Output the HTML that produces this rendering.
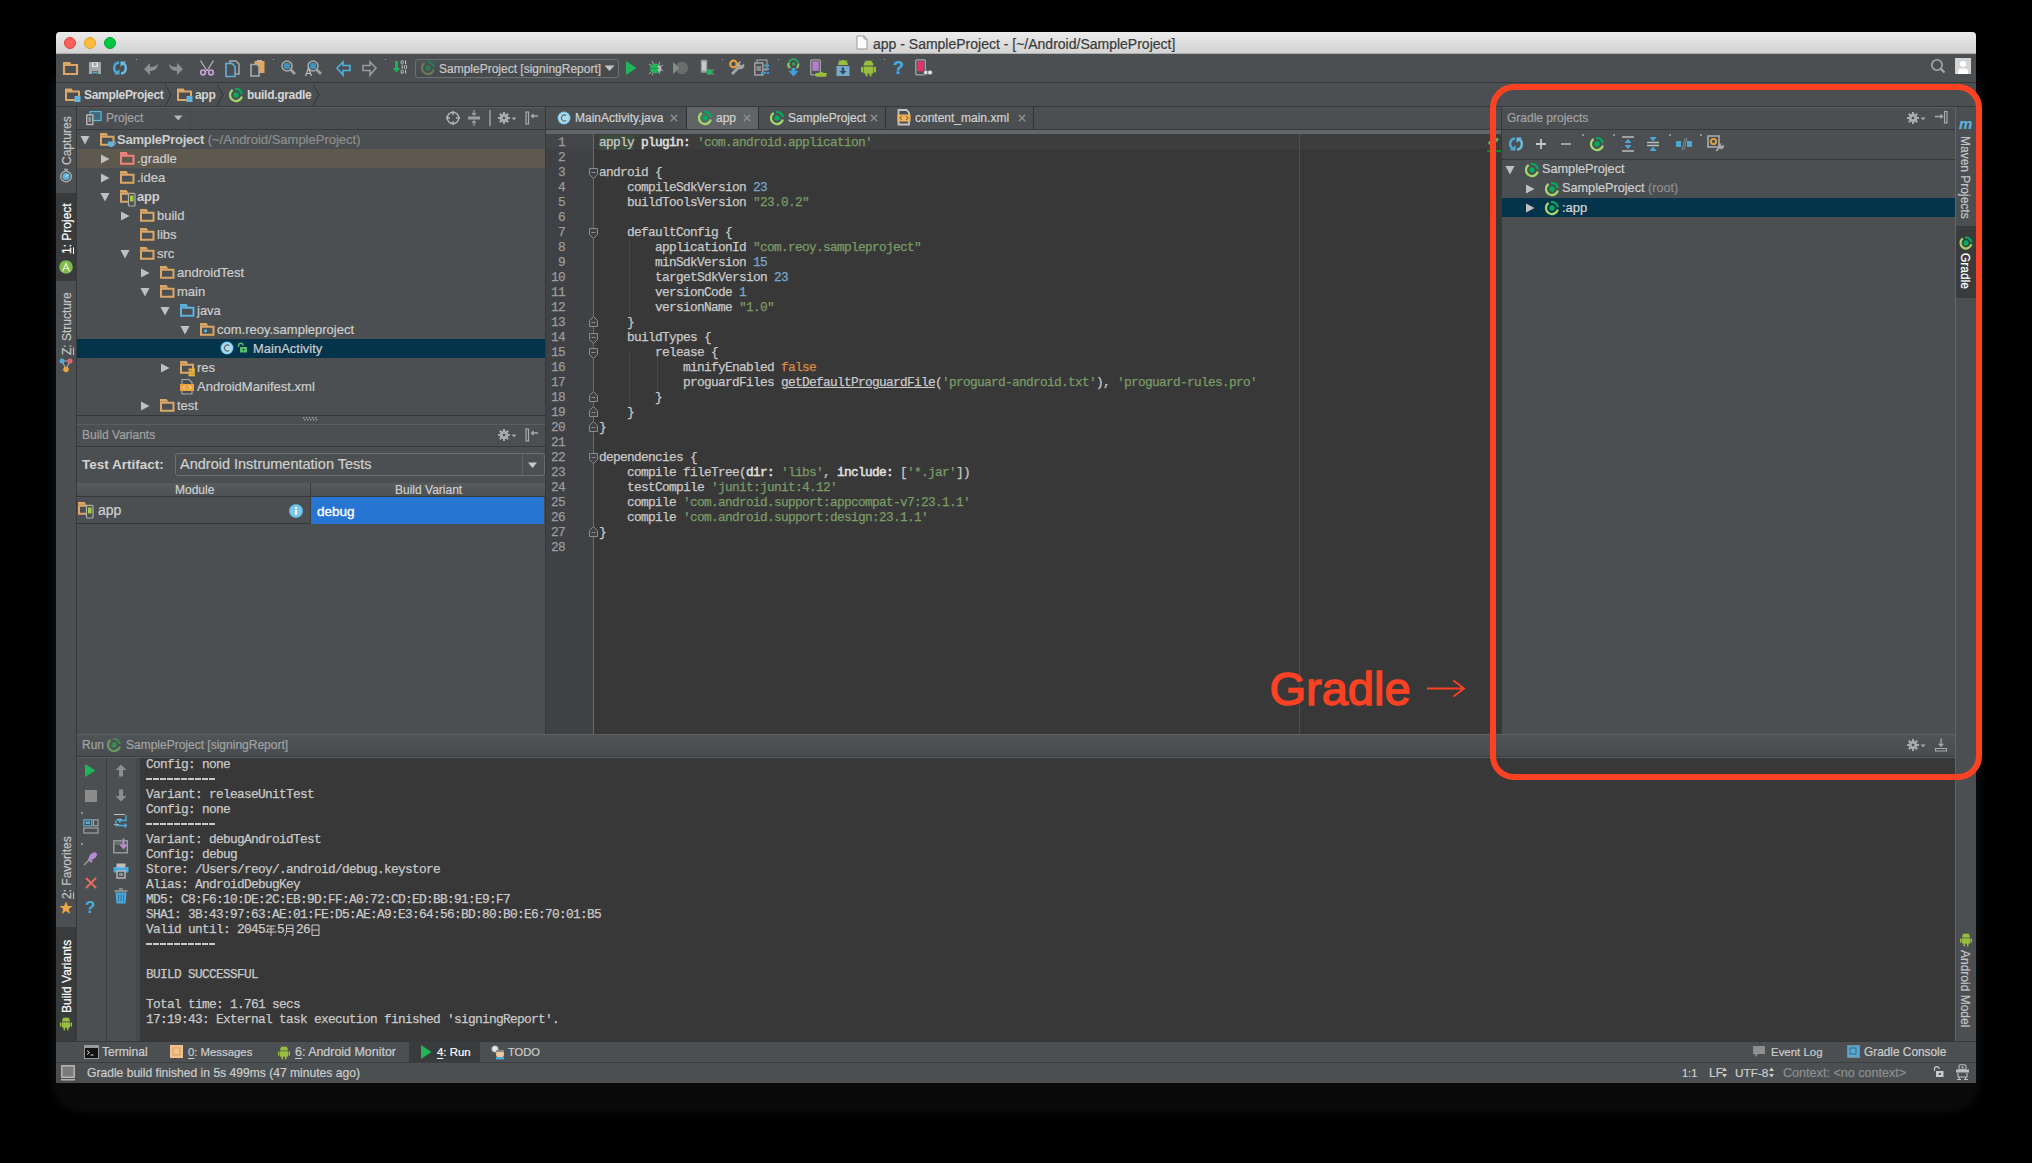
<!DOCTYPE html><html><head><meta charset="utf-8"><style>
*{margin:0;padding:0;box-sizing:border-box}
html,body{width:2032px;height:1163px;overflow:hidden;background:#000}
body{position:relative;font-family:"Liberation Sans",sans-serif;font-size:12px;color:#c9c9c9}
.a{position:absolute}
svg.a{overflow:visible}
.t{position:absolute;white-space:pre;-webkit-text-stroke:0.2px currentColor}
.m{font-family:"Liberation Mono",monospace;font-size:12.8px;letter-spacing:-0.68px;-webkit-text-stroke:0.25px currentColor}
.s{color:#7b9b67}.n{color:#79a7cf}.k{color:#dc8a45}
.vr{position:absolute;transform-origin:0 0;white-space:pre;line-height:20px;height:20px;-webkit-text-stroke:0.2px currentColor}
u{text-decoration:underline;text-underline-offset:2px}
b{-webkit-text-stroke:0}
</style></head><body>
<div class="a" style="left:51px;top:60px;width:1930px;height:1053px;border-radius:34px;background:#0a0a0a;filter:blur(3px)"></div>
<div class="a" style="left:56px;top:32px;width:1920px;height:1051px;background:#4b4f51;border-radius:4px 4px 0 0"></div>
<div class="a" style="left:56px;top:32px;width:1920px;height:22px;background:linear-gradient(#ebebeb,#d3d3d3);border-radius:4px 4px 0 0;border-bottom:1px solid #b0b0b0"></div>
<div class="a" style="left:64px;top:37px;width:12px;height:12px;border-radius:50%;background:#fc605c;border:1px solid #e0443e"></div>
<div class="a" style="left:84px;top:37px;width:12px;height:12px;border-radius:50%;background:#fdbc40;border:1px solid #dea123"></div>
<div class="a" style="left:104px;top:37px;width:12px;height:12px;border-radius:50%;background:#00c642;border:1px solid #00a52b"></div>
<svg class="a" style="left:856px;top:35px;" width="12" height="15" viewBox="0 0 12 15"><path d="M1 1h7l3 3v10H1z" fill="#fafafa" stroke="#9a9a9a" stroke-width="1"/><path d="M8 1v3h3" fill="none" stroke="#9a9a9a"/></svg>
<div class="t" style="left:873px;top:33.5px;height:20px;line-height:20px;font-size:14px;color:#3a3a3a">app - SampleProject - [~/Android/SampleProject]</div>
<div class="a" style="left:56px;top:82px;width:1920px;height:1px;background:#363839"></div>
<div class="a" style="left:135.5px;top:58.5px;width:1.2px;height:1.2px;background:#a0a2a3"></div>
<div class="a" style="left:272.5px;top:58.5px;width:1.2px;height:1.2px;background:#a0a2a3"></div>
<div class="a" style="left:384.5px;top:58.5px;width:1.2px;height:1.2px;background:#a0a2a3"></div>
<div class="a" style="left:721.5px;top:58.5px;width:1.2px;height:1.2px;background:#a0a2a3"></div>
<div class="a" style="left:778.0px;top:58.5px;width:1.2px;height:1.2px;background:#a0a2a3"></div>
<div class="a" style="left:884.0px;top:58.5px;width:1.2px;height:1.2px;background:#a0a2a3"></div>
<svg class="a" style="left:63px;top:62px;" width="15" height="13" viewBox="0 0 15 13"><path d="M1 3h13v9H1z" fill="none" stroke="#dca766" stroke-width="2.2"/><path d="M0 0h7l1.5 2.5H0z" fill="#dca766"/></svg>
<svg class="a" style="left:89px;top:62px;" width="13" height="13" viewBox="0 0 13 13"><path d="M0 0h12v12H0z" fill="#a7a7a7"/><rect x="3" y="0.5" width="6" height="4.5" fill="#e8e8e8"/><rect x="4.5" y="1" width="3" height="3" fill="#a7a7a7"/><rect x="3" y="9" width="6" height="3" fill="#4a4f51"/><rect x="3.5" y="9.5" width="5" height="2" fill="#5aa3cc"/></svg>
<svg class="a" style="left:112px;top:60px;" width="16" height="16" viewBox="0 0 16 16"><path d="M7 2.5A5.5 5.5 0 0 0 6 13.2" fill="none" stroke="#49a9da" stroke-width="2.4"/><path d="M2 14.5L7.5 14.5L7.5 9z" fill="#49a9da"/><path d="M9 13.5A5.5 5.5 0 0 0 10 2.8" fill="none" stroke="#6bbbe2" stroke-width="2.4"/><path d="M14 1.5L8.5 1.5L8.5 7z" fill="#6bbbe2"/></svg>
<svg class="a" style="left:144px;top:62px;" width="14" height="13" viewBox="0 0 14 13"><path d="M0 7L6 1V5C10 5 13 4 14 1C14 7 10 9 6 9V13z" fill="#8e8e8e"/></svg>
<svg class="a" style="left:169px;top:62px;" width="14" height="13" viewBox="0 0 14 13"><path d="M14 7L8 1V5C4 5 1 4 0 1C0 7 4 9 8 9V13z" fill="#8e8e8e" transform="translate(0,0)"/></svg>
<svg class="a" style="left:199px;top:60px;" width="16" height="16" viewBox="0 0 16 16"><path d="M1.5 0.5L8 11M14.5 0.5L8 11" stroke="#b4b4b4" stroke-width="1.3"/><circle cx="4" cy="12.5" r="2.3" fill="none" stroke="#c99bd8" stroke-width="1.8"/><circle cx="12" cy="12.5" r="2.3" fill="none" stroke="#c99bd8" stroke-width="1.8"/></svg>
<svg class="a" style="left:225px;top:60px;" width="16" height="17" viewBox="0 0 16 17"><path d="M5 1h6l3 3v10H5z" fill="#4a4f51" stroke="#a9a9a9" stroke-width="1.5"/><path d="M1 3.5h6l3 3v10H1z" fill="#4a4f51" stroke="#62b0dc" stroke-width="1.6"/></svg>
<svg class="a" style="left:250px;top:60px;" width="16" height="17" viewBox="0 0 16 17"><rect x="4.5" y="1" width="10" height="12" fill="#e0a85e"/><rect x="7" y="0" width="5" height="2" fill="#b8b8b8"/><path d="M1 4.5h6l2 2V16H1z" fill="#4a4f51" stroke="#ababab" stroke-width="1.6"/></svg>
<svg class="a" style="left:280px;top:59px;" width="18" height="18" viewBox="0 0 18 18"><circle cx="7" cy="7" r="5" fill="#4a4f51" stroke="#a9a9a9" stroke-width="1.6"/><circle cx="7" cy="7" r="3.2" fill="#3e93b9"/><path d="M10.5 10.5L15 15" stroke="#a2a2a2" stroke-width="2.6"/></svg>
<svg class="a" style="left:305px;top:59px;" width="18" height="18" viewBox="0 0 18 18"><circle cx="8" cy="7" r="5" fill="#4a4f51" stroke="#a9a9a9" stroke-width="1.6"/><circle cx="8" cy="7" r="3.2" fill="#3e93b9"/><path d="M11.5 10.5L16 15" stroke="#a2a2a2" stroke-width="2.6"/><path d="M0.5 17L3.5 9L6.5 17M1.5 14.5h4" fill="none" stroke="#c4c4c4" stroke-width="1.1"/></svg>
<svg class="a" style="left:336px;top:61px;" width="15" height="15" viewBox="0 0 15 15"><path d="M1 7L7 1V4.5H14V9.5H7V14z" fill="none" stroke="#4eb0df" stroke-width="1.6"/></svg>
<svg class="a" style="left:362px;top:61px;" width="15" height="15" viewBox="0 0 15 15"><path d="M14 7L8 1V4.5H1V9.5H8V14z" fill="none" stroke="#9a9a9a" stroke-width="1.6"/></svg>
<svg class="a" style="left:392px;top:60px;" width="17" height="16" viewBox="0 0 17 16"><path d="M3 1h3v7h2.5L4.5 12.5L0.5 8H3z" fill="#1fb159"/><ellipse cx="10.2" cy="2.3" rx="1.2" ry="1.8" fill="none" stroke="#c4c4c4" stroke-width="0.9"/><path d="M13.6 0.5v3.6" stroke="#c4c4c4" stroke-width="1.1"/><path d="M10.2 5.2v3.6" stroke="#c4c4c4" stroke-width="1.1"/><ellipse cx="13.6" cy="7.0" rx="1.2" ry="1.8" fill="none" stroke="#c4c4c4" stroke-width="0.9"/><ellipse cx="10.2" cy="11.7" rx="1.2" ry="1.8" fill="none" stroke="#c4c4c4" stroke-width="0.9"/><path d="M13.6 9.9v3.6" stroke="#c4c4c4" stroke-width="1.1"/></svg>
<div class="a" style="left:415px;top:59px;width:204px;height:19px;border:1px solid #6d7072;border-radius:3px;background:linear-gradient(#4d5153,#45494b)"></div>
<svg class="a" style="left:420px;top:60px;" width="16" height="16" viewBox="0 0 16 16"><path d="M6.96 2.09A6.0 6.0 0 0 1 13.94 7.16" fill="none" stroke="#2c7a55" stroke-width="2.2"/><path d="M13.82 9.45A6.0 6.0 0 1 1 4.64 3.03" fill="none" stroke="#667a55" stroke-width="2.2"/><circle cx="8" cy="8" r="2.7" fill="#2c7a55"/></svg>
<div class="t" style="left:439px;top:60px;height:19px;line-height:19px;font-size:12px;color:#c8c8c8">SampleProject [signingReport]</div>
<svg class="a" style="left:604px;top:65px;" width="12" height="7" viewBox="0 0 12 7"><path d="M0.5 0.5h10L5.5 6z" fill="#c5c5c5"/></svg>
<svg class="a" style="left:626px;top:61px;" width="11" height="14" viewBox="0 0 11 14"><path d="M0 0L10.5 7L0 14z" fill="#20b55a"/></svg>
<svg class="a" style="left:648px;top:60px;" width="16" height="16" viewBox="0 0 16 16"><path d="M1 4L4 6M1 14L4 11M12 2L10.5 5M12 14L10.5 11M15 5L13 6.5M15 11L13 9.5M4 1L5.5 4M4 15L5.5 12" stroke="#b9b9b9" stroke-width="0.9"/><ellipse cx="7.5" cy="8.5" rx="5.5" ry="5" fill="#22b459"/><ellipse cx="11.5" cy="8.5" rx="1.8" ry="3.3" fill="#b9b9b9"/><path d="M2 8.5h9" stroke="#189048" stroke-width="0.7"/></svg>
<svg class="a" style="left:673px;top:61px;" width="15" height="14" viewBox="0 0 15 14"><defs><pattern id="hp" width="2.8" height="2.8" patternUnits="userSpaceOnUse" patternTransform="rotate(45)"><rect width="1.4" height="1.4" fill="#8a8a8a"/><rect x="1.4" y="1.4" width="1.4" height="1.4" fill="#8a8a8a"/></pattern><clipPath id="hc"><circle cx="9" cy="7" r="6.2"/></clipPath></defs><rect x="2" y="0" width="14" height="14" fill="url(#hp)" clip-path="url(#hc)"/><path d="M0 1L6.5 7L0 13z" fill="#8a8a8a"/></svg>
<svg class="a" style="left:700px;top:59px;" width="15" height="18" viewBox="0 0 15 18"><rect x="0.8" y="0.8" width="6.5" height="13" rx="1" fill="#9e9e9e"/><rect x="2" y="2.5" width="4" height="9" fill="#c9c9c9"/><ellipse cx="9.5" cy="13" rx="3" ry="3" fill="#21b45a"/><path d="M12.5 11.5l1.5-1M12.5 14.5l1.5 1" stroke="#b9b9b9" stroke-width="0.8"/></svg>
<svg class="a" style="left:729px;top:59px;" width="17" height="18" viewBox="0 0 17 18"><circle cx="4.5" cy="5" r="3.3" fill="none" stroke="#e3a33d" stroke-width="2.2"/><path d="M15 4.5L12.5 6.5L10.5 5L12.5 2.5A4 4 0 0 0 8 8L2 14L4 16L10 10A4 4 0 0 0 15 4.5z" fill="#a6a6a6"/></svg>
<svg class="a" style="left:754px;top:59px;" width="16" height="18" viewBox="0 0 16 18"><rect x="3" y="1" width="10" height="10" fill="none" stroke="#a0a0a0" stroke-width="1.2"/><rect x="0.8" y="4" width="8" height="12" fill="#4a4f51" stroke="#a8a8a8" stroke-width="1.4"/><rect x="2.5" y="7" width="4.5" height="5" fill="#8a8a8a"/><rect x="10" y="5.5" width="2" height="2" fill="#3ea2d8"/><rect x="13" y="5.5" width="2" height="2" fill="#3ea2d8"/><rect x="10" y="9" width="2" height="2" fill="#3ea2d8"/><rect x="13" y="9" width="2" height="2" fill="#3ea2d8"/><rect x="7" y="13" width="2" height="2" fill="#3ea2d8"/><rect x="10" y="13" width="2" height="2" fill="#3ea2d8"/><rect x="13" y="13" width="2" height="2" fill="#3ea2d8"/></svg>
<svg class="a" style="left:786px;top:59px;" width="15" height="18" viewBox="0 0 15 18"><path d="M3 5A4.5 4.5 0 0 1 12 4" fill="none" stroke="#2aa45d" stroke-width="2"/><path d="M2.5 4A4.5 4.5 0 0 0 4 9" fill="none" stroke="#8ccc6b" stroke-width="2"/><path d="M12.3 4.5A4.5 4.5 0 0 1 10.5 9" fill="none" stroke="#8ccc6b" stroke-width="2"/><circle cx="7.5" cy="5" r="1.8" fill="#2aa45d"/><path d="M5.5 9h4v3h3l-5 5.5l-5-5.5h3z" fill="#3fa3d8"/></svg>
<svg class="a" style="left:810px;top:59px;" width="17" height="18" viewBox="0 0 17 18"><rect x="0.8" y="0.8" width="9.5" height="15" rx="1" fill="#4a4f51" stroke="#a8a8a8" stroke-width="1.3"/><rect x="2.3" y="2.3" width="6.5" height="9.5" fill="#b37ecc"/><path d="M6.5 17.5A4.2 4.2 0 0 1 15.5 17.5z" fill="#98bd3f"/><rect x="5.5" y="14" width="11" height="3.5" fill="#98bd3f"/></svg>
<svg class="a" style="left:836px;top:59px;" width="14" height="18" viewBox="0 0 14 18"><path d="M2 6A5 5 0 0 1 12 6z" fill="#98bd3f"/><path d="M3 1l1.5 2M11 1L9.5 3" stroke="#98bd3f" stroke-width="0.9"/><rect x="0.5" y="7" width="13" height="10" fill="#77a9cb"/><path d="M5.8 8.5h2.4v3.5h2.3L7 15.5L3.5 12h2.3z" fill="#2d4b5c"/></svg>
<svg class="a" style="left:861px;top:59px;" width="15" height="18" viewBox="0 0 15 18"><path d="M2.5 6.5A5 5 0 0 1 12.5 6.5z" fill="#98bd3f"/><path d="M4 1.5l1.5 2M11 1.5L9.5 3.5" stroke="#98bd3f" stroke-width="0.9"/><rect x="2.5" y="7.5" width="10" height="7" rx="1" fill="#98bd3f"/><rect x="0" y="7.5" width="2" height="6" rx="1" fill="#98bd3f"/><rect x="13" y="7.5" width="2" height="6" rx="1" fill="#98bd3f"/><rect x="4.5" y="13" width="2" height="4.5" rx="1" fill="#98bd3f"/><rect x="8.5" y="13" width="2" height="4.5" rx="1" fill="#98bd3f"/></svg>
<div class="t" style="left:893px;top:58px;height:20px;line-height:20px;font-size:18px;font-weight:bold;color:#45b0e0;line-height:20px">?</div>
<svg class="a" style="left:915px;top:59px;" width="18" height="18" viewBox="0 0 18 18"><rect x="0.8" y="0.8" width="9.5" height="15" rx="1" fill="#4a4f51" stroke="#a8a8a8" stroke-width="1.3"/><rect x="2.3" y="2.3" width="6.5" height="10" fill="#e8326a"/><circle cx="11" cy="13.5" r="2.5" fill="#e0e0e0" stroke="#4a4f51" stroke-width="0.8"/><circle cx="15" cy="13.5" r="2.5" fill="#e0e0e0" stroke="#4a4f51" stroke-width="0.8"/></svg>
<svg class="a" style="left:1930px;top:58px;" width="18" height="18" viewBox="0 0 18 18"><circle cx="7" cy="7" r="5.2" fill="none" stroke="#a8a8a8" stroke-width="1.6"/><path d="M10.5 10.5L14.5 14.5" stroke="#a8a8a8" stroke-width="2.3"/></svg>
<svg class="a" style="left:1955px;top:58px;" width="16" height="16" viewBox="0 0 16 16"><rect width="16" height="16" fill="#d4d4d4"/><circle cx="8" cy="6" r="3" fill="#fff"/><path d="M3 16V13.5A3 3 0 0 1 6 10.5H10A3 3 0 0 1 13 13.5V16z" fill="#fff"/></svg>
<div class="a" style="left:56px;top:106px;width:1920px;height:1px;background:#363839"></div>
<div class="a" style="left:76px;top:107px;width:1px;height:935px;background:#363839"></div>
<div class="a" style="left:1955px;top:107px;width:1px;height:935px;background:#61666a"></div>
<svg class="a" style="left:65px;top:88px;" width="17" height="14" viewBox="0 0 17 14"><path d="M1 3.5h13v8.5H1z" fill="none" stroke="#dca766" stroke-width="2"/><path d="M0 0.5h6.5l1.5 2.5H0z" fill="#dca766"/><rect x="9.5" y="8" width="6" height="6" fill="#62b2dc"/></svg>
<div class="t" style="left:84px;top:85px;height:20px;line-height:20px;font-size:12px;font-weight:bold;letter-spacing:-0.3px;color:#d6d6d6;-webkit-text-stroke:0">SampleProject</div>
<svg class="a" style="left:165px;top:84px;" width="8" height="22" viewBox="0 0 8 22"><path d="M0.5 0.5L6.5 11L0.5 21.5" fill="none" stroke="#2f3133" stroke-width="1.2"/><path d="M1.5 0.5L7.5 11L1.5 21.5" fill="none" stroke="#5a5e60" stroke-width="0.8"/></svg>
<svg class="a" style="left:177px;top:88px;" width="17" height="14" viewBox="0 0 17 14"><path d="M1 3.5h13v8.5H1z" fill="none" stroke="#dca766" stroke-width="2"/><path d="M0 0.5h6.5l1.5 2.5H0z" fill="#dca766"/><rect x="9.5" y="8" width="6" height="6" fill="#62b2dc"/></svg>
<div class="t" style="left:195px;top:85px;height:20px;line-height:20px;font-size:12px;font-weight:bold;letter-spacing:-0.3px;color:#d6d6d6;-webkit-text-stroke:0">app</div>
<svg class="a" style="left:216.5px;top:84px;" width="8" height="22" viewBox="0 0 8 22"><path d="M0.5 0.5L6.5 11L0.5 21.5" fill="none" stroke="#2f3133" stroke-width="1.2"/><path d="M1.5 0.5L7.5 11L1.5 21.5" fill="none" stroke="#5a5e60" stroke-width="0.8"/></svg>
<svg class="a" style="left:228px;top:87px;" width="16" height="16" viewBox="0 0 16 16"><path d="M6.96 2.09A6.0 6.0 0 0 1 13.94 7.16" fill="none" stroke="#00ad5f" stroke-width="2.2"/><path d="M13.82 9.45A6.0 6.0 0 1 1 4.64 3.03" fill="none" stroke="#a3d66c" stroke-width="2.2"/><circle cx="8" cy="8" r="2.7" fill="#00ad5f"/></svg>
<div class="t" style="left:247px;top:85px;height:20px;line-height:20px;font-size:12px;font-weight:bold;letter-spacing:-0.3px;color:#d6d6d6;-webkit-text-stroke:0">build.gradle</div>
<svg class="a" style="left:312.5px;top:84px;" width="8" height="22" viewBox="0 0 8 22"><path d="M0.5 0.5L6.5 11L0.5 21.5" fill="none" stroke="#2f3133" stroke-width="1.2"/><path d="M1.5 0.5L7.5 11L1.5 21.5" fill="none" stroke="#5a5e60" stroke-width="0.8"/></svg>
<div class="a" style="left:77px;top:129px;width:468px;height:1px;background:#363839"></div>
<div class="a" style="left:545px;top:107px;width:1px;height:627px;background:#363839"></div>
<div class="a" style="left:77px;top:107px;width:468px;height:1px;background:#5a5e60"></div>
<svg class="a" style="left:86px;top:111px;" width="16" height="14" viewBox="0 0 16 14"><rect x="4" y="0.5" width="11" height="9" fill="#3d6a80" stroke="#5fb4df" stroke-width="1.2"/><rect x="0.8" y="4" width="6" height="9.5" fill="#4a4f51" stroke="#b9b9b9" stroke-width="1.4"/><rect x="2.5" y="6" width="2.5" height="5" fill="#9a9a9a"/></svg>
<div class="t" style="left:106px;top:108px;height:20px;line-height:20px;font-size:12px;color:#a3a3a3">Project</div>
<svg class="a" style="left:174px;top:115px;" width="9" height="6" viewBox="0 0 9 6"><path d="M0 0.5h8.5L4.2 5.5z" fill="#b7b7b7"/></svg>
<div class="a" style="left:190px;top:108px;width:1px;height:21px;background:#44484a"></div>
<svg class="a" style="left:446px;top:111px;" width="14" height="14" viewBox="0 0 14 14"><circle cx="7" cy="7" r="5.8" fill="none" stroke="#b4b4b4" stroke-width="1.4"/><path d="M7 0v4M7 10v4M0 7h4M10 7h4" stroke="#b4b4b4" stroke-width="1.4"/></svg>
<svg class="a" style="left:467px;top:110px;" width="14" height="16" viewBox="0 0 14 16"><path d="M1 6.5h12v3H1z" fill="#9e9e9e"/><path d="M7 0v5M7 11v5M5 3l2 2.2L9 3M5 13l2-2.2L9 13" fill="none" stroke="#9e9e9e" stroke-width="1.2"/></svg>
<div class="a" style="left:489px;top:110px;width:2px;height:16px;background:#8a8a8a"></div>
<svg class="a" style="left:498px;top:112px;" width="19" height="12" viewBox="0 0 19 12"><circle cx="6" cy="6" r="4.3" fill="#aaaaaa"/><circle cx="6" cy="6" r="1.3" fill="#4b4f51"/><rect x="5" y="0" width="2" height="2.6" fill="#aaaaaa" transform="rotate(0 6 6)"/><rect x="5" y="0" width="2" height="2.6" fill="#aaaaaa" transform="rotate(45 6 6)"/><rect x="5" y="0" width="2" height="2.6" fill="#aaaaaa" transform="rotate(90 6 6)"/><rect x="5" y="0" width="2" height="2.6" fill="#aaaaaa" transform="rotate(135 6 6)"/><rect x="5" y="0" width="2" height="2.6" fill="#aaaaaa" transform="rotate(180 6 6)"/><rect x="5" y="0" width="2" height="2.6" fill="#aaaaaa" transform="rotate(225 6 6)"/><rect x="5" y="0" width="2" height="2.6" fill="#aaaaaa" transform="rotate(270 6 6)"/><rect x="5" y="0" width="2" height="2.6" fill="#aaaaaa" transform="rotate(315 6 6)"/><path d="M13.5 5.5h5l-2.5 2.8z" fill="#aaaaaa"/></svg>
<svg class="a" style="left:525.5px;top:112px;" width="13" height="13" viewBox="0 0 13 13"><rect x="0" y="0" width="2.5" height="12" fill="none" stroke="#a9a9a9" stroke-width="1.2"/><path d="M12 4H5.5M7.5 2L5.5 4L7.5 6" fill="none" stroke="#a9a9a9" stroke-width="1.3"/></svg>
<div class="a" style="left:77px;top:149px;width:468px;height:19px;background:#5d594e"></div>
<div class="a" style="left:77px;top:339px;width:468px;height:19px;background:#04344b"></div>
<svg class="a" style="left:79.5px;top:135.0px;" width="10" height="10" viewBox="0 0 10 10"><path d="M0.5 1L9.5 1L5 9.5z" fill="#c0c0c0"/></svg>
<svg class="a" style="left:100px;top:133px;" width="15" height="13" viewBox="0 0 15 13"><path d="M1 3.8h12.5v8H1z" fill="none" stroke="#dca766" stroke-width="2"/><path d="M0 0h6.5l1.8 2.8H0z" fill="#dca766"/><path d="M8 8.5h6v2.5a3 3 0 0 1-6 0z" fill="#5cb6e4"/><circle cx="14.5" cy="10" r="1.3" fill="none" stroke="#5cb6e4" stroke-width="0.8"/></svg>
<div class="t" style="left:117px;top:130px;height:19px;line-height:19px;font-size:13px;color:#cdcdcd"><b style="letter-spacing:-0.25px">SampleProject</b> <span style="color:#8f8f8f">(~/Android/SampleProject)</span></div>
<svg class="a" style="left:100.0px;top:153.5px;" width="10" height="10" viewBox="0 0 10 10"><path d="M1 0.5L9.5 5L1 9.5z" fill="#c0c0c0"/></svg>
<svg class="a" style="left:120px;top:152px;" width="15" height="13" viewBox="0 0 15 13"><path d="M1 3.8h12.5v8H1z" fill="none" stroke="#f0827a" stroke-width="2"/><path d="M0 0h6.5l1.8 2.8H0z" fill="#f0827a"/></svg>
<div class="t" style="left:137px;top:149px;height:19px;line-height:19px;font-size:13px;color:#cdcdcd">.gradle</div>
<svg class="a" style="left:100.0px;top:172.5px;" width="10" height="10" viewBox="0 0 10 10"><path d="M1 0.5L9.5 5L1 9.5z" fill="#c0c0c0"/></svg>
<svg class="a" style="left:120px;top:171px;" width="15" height="13" viewBox="0 0 15 13"><path d="M1 3.8h12.5v8H1z" fill="none" stroke="#dca766" stroke-width="2"/><path d="M0 0h6.5l1.8 2.8H0z" fill="#dca766"/></svg>
<div class="t" style="left:137px;top:168px;height:19px;line-height:19px;font-size:13px;color:#cdcdcd">.idea</div>
<svg class="a" style="left:99.5px;top:192.0px;" width="10" height="10" viewBox="0 0 10 10"><path d="M0.5 1L9.5 1L5 9.5z" fill="#c0c0c0"/></svg>
<svg class="a" style="left:120px;top:190px;" width="17" height="17" viewBox="0 0 17 17"><path d="M1 3.8h12v8H1z" fill="none" stroke="#dca766" stroke-width="2"/><path d="M0 0h6.5l1.8 2.8H0z" fill="#dca766"/><rect x="8.5" y="3.5" width="6.5" height="12.5" rx="0.8" fill="#4a4f51" stroke="#b1b1b1" stroke-width="1.2"/><rect x="10" y="5.5" width="3.5" height="6" fill="#a5cd39"/></svg>
<div class="t" style="left:137px;top:187px;height:19px;line-height:19px;font-size:13px;color:#cdcdcd"><b style="letter-spacing:-0.25px">app</b></div>
<svg class="a" style="left:120.0px;top:210.5px;" width="10" height="10" viewBox="0 0 10 10"><path d="M1 0.5L9.5 5L1 9.5z" fill="#c0c0c0"/></svg>
<svg class="a" style="left:140px;top:209px;" width="15" height="13" viewBox="0 0 15 13"><path d="M1 3.8h12.5v8H1z" fill="none" stroke="#dca766" stroke-width="2"/><path d="M0 0h6.5l1.8 2.8H0z" fill="#dca766"/></svg>
<div class="t" style="left:157px;top:206px;height:19px;line-height:19px;font-size:13px;color:#cdcdcd">build</div>
<svg class="a" style="left:140px;top:228px;" width="15" height="13" viewBox="0 0 15 13"><path d="M1 3.8h12.5v8H1z" fill="none" stroke="#dca766" stroke-width="2"/><path d="M0 0h6.5l1.8 2.8H0z" fill="#dca766"/></svg>
<div class="t" style="left:157px;top:225px;height:19px;line-height:19px;font-size:13px;color:#cdcdcd">libs</div>
<svg class="a" style="left:119.5px;top:249.0px;" width="10" height="10" viewBox="0 0 10 10"><path d="M0.5 1L9.5 1L5 9.5z" fill="#c0c0c0"/></svg>
<svg class="a" style="left:140px;top:247px;" width="15" height="13" viewBox="0 0 15 13"><path d="M1 3.8h12.5v8H1z" fill="none" stroke="#dca766" stroke-width="2"/><path d="M0 0h6.5l1.8 2.8H0z" fill="#dca766"/></svg>
<div class="t" style="left:157px;top:244px;height:19px;line-height:19px;font-size:13px;color:#cdcdcd">src</div>
<svg class="a" style="left:140.0px;top:267.5px;" width="10" height="10" viewBox="0 0 10 10"><path d="M1 0.5L9.5 5L1 9.5z" fill="#c0c0c0"/></svg>
<svg class="a" style="left:160px;top:266px;" width="15" height="13" viewBox="0 0 15 13"><path d="M1 3.8h12.5v8H1z" fill="none" stroke="#dca766" stroke-width="2"/><path d="M0 0h6.5l1.8 2.8H0z" fill="#dca766"/></svg>
<div class="t" style="left:177px;top:263px;height:19px;line-height:19px;font-size:13px;color:#cdcdcd">androidTest</div>
<svg class="a" style="left:139.5px;top:287.0px;" width="10" height="10" viewBox="0 0 10 10"><path d="M0.5 1L9.5 1L5 9.5z" fill="#c0c0c0"/></svg>
<svg class="a" style="left:160px;top:285px;" width="15" height="13" viewBox="0 0 15 13"><path d="M1 3.8h12.5v8H1z" fill="none" stroke="#dca766" stroke-width="2"/><path d="M0 0h6.5l1.8 2.8H0z" fill="#dca766"/></svg>
<div class="t" style="left:177px;top:282px;height:19px;line-height:19px;font-size:13px;color:#cdcdcd">main</div>
<svg class="a" style="left:159.5px;top:306.0px;" width="10" height="10" viewBox="0 0 10 10"><path d="M0.5 1L9.5 1L5 9.5z" fill="#c0c0c0"/></svg>
<svg class="a" style="left:180px;top:304px;" width="15" height="13" viewBox="0 0 15 13"><path d="M1 3.8h12.5v8H1z" fill="none" stroke="#5cb3de" stroke-width="2"/><path d="M0 0h6.5l1.8 2.8H0z" fill="#5cb3de"/></svg>
<div class="t" style="left:197px;top:301px;height:19px;line-height:19px;font-size:13px;color:#cdcdcd">java</div>
<svg class="a" style="left:179.5px;top:325.0px;" width="10" height="10" viewBox="0 0 10 10"><path d="M0.5 1L9.5 1L5 9.5z" fill="#c0c0c0"/></svg>
<svg class="a" style="left:200px;top:323px;" width="15" height="13" viewBox="0 0 15 13"><path d="M1 3.8h12.5v8H1z" fill="none" stroke="#dca766" stroke-width="2"/><path d="M0 0h6.5l1.8 2.8H0z" fill="#dca766"/><circle cx="5.5" cy="7.8" r="1.6" fill="#5cb6e4"/></svg>
<div class="t" style="left:217px;top:320px;height:19px;line-height:19px;font-size:13px;color:#cdcdcd">com.reoy.sampleproject</div>
<svg class="a" style="left:220px;top:340.5px;" width="14" height="14" viewBox="0 0 14 14"><circle cx="7" cy="7" r="6.5" fill="#6fc3ea"/><circle cx="7" cy="7" r="5.5" fill="#a9dcf3"/><path d="M9.3 4.6A3 3 0 1 0 9.3 9.4" fill="none" stroke="#6a625c" stroke-width="1.1"/></svg>
<svg class="a" style="left:237px;top:343px;" width="11" height="10" viewBox="0 0 11 10"><path d="M1.5 4V2.5a2.3 2.3 0 0 1 4.6 0" fill="none" stroke="#55bd6e" stroke-width="1.4"/><rect x="3" y="4" width="7" height="5.5" fill="#55bd6e"/><path d="M5.5 6h2L6.5 8z" fill="#04344b"/></svg>
<div class="t" style="left:253px;top:339px;height:19px;line-height:19px;font-size:13px;color:#cdcdcd">MainActivity</div>
<svg class="a" style="left:160.0px;top:362.5px;" width="10" height="10" viewBox="0 0 10 10"><path d="M1 0.5L9.5 5L1 9.5z" fill="#c0c0c0"/></svg>
<svg class="a" style="left:180px;top:361px;" width="17" height="17" viewBox="0 0 17 17"><path d="M1 3.8h12v8H1z" fill="none" stroke="#dca766" stroke-width="2"/><path d="M0 0h6.5l1.8 2.8H0z" fill="#dca766"/><rect x="8.5" y="7.5" width="6.5" height="2.2" fill="#e6b23a"/><rect x="8.5" y="10.3" width="6.5" height="2.2" fill="#e6b23a"/><rect x="8.5" y="13.1" width="6.5" height="2.2" fill="#e6b23a"/></svg>
<div class="t" style="left:197px;top:358px;height:19px;line-height:19px;font-size:13px;color:#cdcdcd">res</div>
<svg class="a" style="left:180px;top:379px;" width="15" height="16" viewBox="0 0 15 16"><path d="M2 0.5h7l3 3V15H2z" fill="#4a4f51" stroke="#a9a9a9" stroke-width="1.1"/><rect x="0" y="5" width="14" height="7" fill="#eea23e"/><path d="M5 6.5L3 8.5L5 10.5M9 6.5L11 8.5L9 10.5" fill="none" stroke="#fff6dd" stroke-width="1"/></svg>
<div class="t" style="left:197px;top:377px;height:19px;line-height:19px;font-size:13px;color:#cdcdcd">AndroidManifest.xml</div>
<svg class="a" style="left:140.0px;top:400.5px;" width="10" height="10" viewBox="0 0 10 10"><path d="M1 0.5L9.5 5L1 9.5z" fill="#c0c0c0"/></svg>
<svg class="a" style="left:160px;top:399px;" width="15" height="13" viewBox="0 0 15 13"><path d="M1 3.8h12.5v8H1z" fill="none" stroke="#dca766" stroke-width="2"/><path d="M0 0h6.5l1.8 2.8H0z" fill="#dca766"/></svg>
<div class="t" style="left:177px;top:396px;height:19px;line-height:19px;font-size:13px;color:#cdcdcd">test</div>
<div class="a" style="left:77px;top:415px;width:468px;height:1px;background:#353739"></div>
<div class="a" style="left:77px;top:424px;width:468px;height:1px;background:#5a5e60"></div>
<svg class="a" style="left:303px;top:417px;" width="16" height="4" viewBox="0 0 16 4"><rect x="0" y="0" width="1.4" height="1.4" fill="#a0a0a0"/><rect x="1" y="2" width="1.4" height="1.4" fill="#a0a0a0"/><rect x="3" y="0" width="1.4" height="1.4" fill="#a0a0a0"/><rect x="4" y="2" width="1.4" height="1.4" fill="#a0a0a0"/><rect x="6" y="0" width="1.4" height="1.4" fill="#a0a0a0"/><rect x="7" y="2" width="1.4" height="1.4" fill="#a0a0a0"/><rect x="9" y="0" width="1.4" height="1.4" fill="#a0a0a0"/><rect x="10" y="2" width="1.4" height="1.4" fill="#a0a0a0"/><rect x="12" y="0" width="1.4" height="1.4" fill="#a0a0a0"/><rect x="13" y="2" width="1.4" height="1.4" fill="#a0a0a0"/></svg>
<div class="a" style="left:77px;top:446px;width:468px;height:1px;background:#363839"></div>
<div class="t" style="left:82px;top:425px;height:21px;line-height:21px;font-size:12px;color:#a3a3a3">Build Variants</div>
<svg class="a" style="left:498px;top:429px;" width="19" height="12" viewBox="0 0 19 12"><circle cx="6" cy="6" r="4.3" fill="#aaaaaa"/><circle cx="6" cy="6" r="1.3" fill="#4b4f51"/><rect x="5" y="0" width="2" height="2.6" fill="#aaaaaa" transform="rotate(0 6 6)"/><rect x="5" y="0" width="2" height="2.6" fill="#aaaaaa" transform="rotate(45 6 6)"/><rect x="5" y="0" width="2" height="2.6" fill="#aaaaaa" transform="rotate(90 6 6)"/><rect x="5" y="0" width="2" height="2.6" fill="#aaaaaa" transform="rotate(135 6 6)"/><rect x="5" y="0" width="2" height="2.6" fill="#aaaaaa" transform="rotate(180 6 6)"/><rect x="5" y="0" width="2" height="2.6" fill="#aaaaaa" transform="rotate(225 6 6)"/><rect x="5" y="0" width="2" height="2.6" fill="#aaaaaa" transform="rotate(270 6 6)"/><rect x="5" y="0" width="2" height="2.6" fill="#aaaaaa" transform="rotate(315 6 6)"/><path d="M13.5 5.5h5l-2.5 2.8z" fill="#aaaaaa"/></svg>
<svg class="a" style="left:525.5px;top:429px;" width="13" height="13" viewBox="0 0 13 13"><rect x="0" y="0" width="2.5" height="12" fill="none" stroke="#a9a9a9" stroke-width="1.2"/><path d="M12 4H5.5M7.5 2L5.5 4L7.5 6" fill="none" stroke="#a9a9a9" stroke-width="1.3"/></svg>
<div class="t" style="left:82px;top:454px;height:21px;line-height:21px;font-size:13.5px;font-weight:bold;color:#d2d2d2;-webkit-text-stroke:0">Test Artifact:</div>
<div class="a" style="left:175px;top:453px;width:370px;height:23px;border:1px solid #6c6f71;border-radius:3px;background:#4b4f51"></div>
<div class="a" style="left:522px;top:454px;width:1px;height:21px;background:#5e6264"></div>
<div class="t" style="left:180px;top:454px;height:21px;line-height:21px;font-size:14.5px;color:#d0d0d0">Android Instrumentation Tests</div>
<svg class="a" style="left:528px;top:462px;" width="10" height="7" viewBox="0 0 10 7"><path d="M0 0.5h9L4.5 6z" fill="#c9c9c9"/></svg>
<div class="a" style="left:77px;top:483px;width:468px;height:14px;background:linear-gradient(#575b5d,#4c5052)"></div>
<div class="a" style="left:77px;top:496px;width:468px;height:1px;background:#363839"></div>
<div class="a" style="left:310px;top:483px;width:1px;height:14px;background:#393b3d"></div>
<div class="t" style="left:175px;top:482px;height:16px;line-height:16px;font-size:12px;color:#d0d0d0">Module</div>
<div class="t" style="left:395px;top:482px;height:16px;line-height:16px;font-size:12px;color:#d0d0d0">Build Variant</div>
<div class="a" style="left:311px;top:497px;width:233px;height:27px;background:#2675d3"></div>
<div class="a" style="left:77px;top:524px;width:468px;height:1px;#353739"></div>
<div class="a" style="left:77px;top:523px;width:234px;height:1px;background:#353739"></div>
<div class="a" style="left:310px;top:497px;width:1px;height:27px;background:#393b3d"></div>
<svg class="a" style="left:78px;top:502px;" width="17" height="17" viewBox="0 0 17 17"><path d="M1 3.8h12v8H1z" fill="none" stroke="#dca766" stroke-width="2"/><path d="M0 0h6.5l1.8 2.8H0z" fill="#dca766"/><rect x="8.5" y="3.5" width="6.5" height="12.5" rx="0.8" fill="#4a4f51" stroke="#b1b1b1" stroke-width="1.2"/><rect x="10" y="5.5" width="3.5" height="6" fill="#a5cd39"/></svg>
<div class="t" style="left:98px;top:500px;height:21px;line-height:21px;font-size:14px;color:#d0d0d0">app</div>
<svg class="a" style="left:289px;top:504px;" width="14" height="14" viewBox="0 0 14 14"><circle cx="7" cy="7" r="7" fill="#58b2e0"/><circle cx="7" cy="7" r="6" fill="#7ec8ec"/><rect x="6" y="6" width="2" height="5" fill="#fff"/><rect x="6" y="3" width="2" height="2" fill="#fff"/></svg>
<div class="t" style="left:317px;top:500.5px;height:21px;line-height:21px;font-size:13.5px;color:#ffffff;-webkit-text-stroke:0.35px #fff">debug</div>
<div class="a" style="left:546px;top:107px;width:955px;height:23px;background:#4b4f51"></div>
<div class="a" style="left:546px;top:129px;width:955px;height:1px;background:#363839"></div>
<div class="a" style="left:546px;top:130px;width:955px;height:4px;background:#61666a"></div>
<div class="a" style="left:546px;top:134px;width:47px;height:600px;background:#404144"></div>
<div class="a" style="left:593px;top:134px;width:1px;height:600px;background:#6a6a6a"></div>
<div class="a" style="left:594px;top:134px;width:907px;height:600px;background:#383838"></div>
<div class="a" style="left:546px;top:134px;width:47px;height:15px;background:#444548"></div>
<div class="a" style="left:594px;top:134px;width:907px;height:15px;background:#3d3d3d"></div>
<div class="a" style="left:1501px;top:107px;width:1px;height:627px;background:#363839"></div>
<div class="a" style="left:686px;top:107px;width:72px;height:22px;background:#606467"></div>
<div class="a" style="left:686px;top:107px;width:1px;height:22px;background:#2f3133"></div>
<div class="a" style="left:758px;top:107px;width:1px;height:22px;background:#2f3133"></div>
<div class="a" style="left:885px;top:107px;width:1px;height:22px;background:#2f3133"></div>
<div class="a" style="left:1033px;top:107px;width:1px;height:22px;background:#2f3133"></div>
<svg class="a" style="left:556.5px;top:111px;" width="14" height="14" viewBox="0 0 14 14"><circle cx="7" cy="7" r="6.5" fill="#6fc3ea"/><circle cx="7" cy="7" r="5.5" fill="#a9dcf3"/><path d="M9.3 4.6A3 3 0 1 0 9.3 9.4" fill="none" stroke="#6a625c" stroke-width="1.1"/></svg>
<div class="t" style="left:575px;top:108px;height:20px;line-height:20px;font-size:12px;color:#d2d2d2">MainActivity.java</div>
<svg class="a" style="left:670px;top:114px;" width="8" height="8" viewBox="0 0 8 8"><path d="M0.8 0.8L7.2 7.2M7.2 0.8L0.8 7.2" stroke="#8d8d8d" stroke-width="1.5"/></svg>
<svg class="a" style="left:697px;top:110px;" width="16" height="16" viewBox="0 0 16 16"><path d="M6.96 2.09A6.0 6.0 0 0 1 13.94 7.16" fill="none" stroke="#00ad5f" stroke-width="2.2"/><path d="M13.82 9.45A6.0 6.0 0 1 1 4.64 3.03" fill="none" stroke="#a3d66c" stroke-width="2.2"/><circle cx="8" cy="8" r="2.7" fill="#00ad5f"/></svg>
<div class="t" style="left:716px;top:108px;height:20px;line-height:20px;font-size:12px;color:#d2d2d2">app</div>
<svg class="a" style="left:743px;top:114px;" width="8" height="8" viewBox="0 0 8 8"><path d="M0.8 0.8L7.2 7.2M7.2 0.8L0.8 7.2" stroke="#8d8d8d" stroke-width="1.5"/></svg>
<svg class="a" style="left:768.5px;top:110px;" width="16" height="16" viewBox="0 0 16 16"><path d="M6.96 2.09A6.0 6.0 0 0 1 13.94 7.16" fill="none" stroke="#00ad5f" stroke-width="2.2"/><path d="M13.82 9.45A6.0 6.0 0 1 1 4.64 3.03" fill="none" stroke="#a3d66c" stroke-width="2.2"/><circle cx="8" cy="8" r="2.7" fill="#00ad5f"/></svg>
<div class="t" style="left:788px;top:108px;height:20px;line-height:20px;font-size:12px;color:#d2d2d2">SampleProject</div>
<svg class="a" style="left:869.5px;top:114px;" width="8" height="8" viewBox="0 0 8 8"><path d="M0.8 0.8L7.2 7.2M7.2 0.8L0.8 7.2" stroke="#8d8d8d" stroke-width="1.5"/></svg>
<svg class="a" style="left:897px;top:109px;" width="15" height="17" viewBox="0 0 15 17"><path d="M1.5 1h8l2.5 2.5V15.5H1.5z" fill="#4a4f51" stroke="#c4c4c4" stroke-width="1.8"/><rect x="0.5" y="5.5" width="13" height="7" fill="#f5b45a"/><path d="M5 6.8L3 9L5 11.2M9 6.8L11 9L9 11.2" fill="none" stroke="#8c6a43" stroke-width="1.1"/></svg>
<div class="t" style="left:915px;top:108px;height:20px;line-height:20px;font-size:12px;color:#d2d2d2">content_main.xml</div>
<svg class="a" style="left:1017.5px;top:114px;" width="8" height="8" viewBox="0 0 8 8"><path d="M0.8 0.8L7.2 7.2M7.2 0.8L0.8 7.2" stroke="#8d8d8d" stroke-width="1.5"/></svg>
<div class="a" style="left:1299px;top:134px;width:1px;height:600px;background:#4e4e4e"></div>
<div class="a" style="left:629px;top:239px;width:1px;height:76px;background:#474747"></div>
<div class="a" style="left:629px;top:350px;width:1px;height:56px;background:#474747"></div>
<div class="a" style="left:657px;top:356px;width:1px;height:37px;background:#474747"></div>
<div class="t m" style="left:558px;top:135px;height:15px;line-height:15px;color:#9c9c9c">1</div>
<div class="t m" style="left:599px;top:135px;height:15px;line-height:15px;color:#c9c9c9"><span style="background:#3e4c3d">apply</span> <span style="color:#e2e2e2;-webkit-text-stroke:0.45px #e2e2e2">plugin:</span> <span class="s">'com.android.application'</span></div>
<div class="t m" style="left:558px;top:150px;height:15px;line-height:15px;color:#9c9c9c">2</div>
<div class="t m" style="left:558px;top:165px;height:15px;line-height:15px;color:#9c9c9c">3</div>
<div class="t m" style="left:599px;top:165px;height:15px;line-height:15px;color:#c9c9c9">android {</div>
<div class="t m" style="left:558px;top:180px;height:15px;line-height:15px;color:#9c9c9c">4</div>
<div class="t m" style="left:599px;top:180px;height:15px;line-height:15px;color:#c9c9c9">    compileSdkVersion <span class="n">23</span></div>
<div class="t m" style="left:558px;top:195px;height:15px;line-height:15px;color:#9c9c9c">5</div>
<div class="t m" style="left:599px;top:195px;height:15px;line-height:15px;color:#c9c9c9">    buildToolsVersion <span class="s">"23.0.2"</span></div>
<div class="t m" style="left:558px;top:210px;height:15px;line-height:15px;color:#9c9c9c">6</div>
<div class="t m" style="left:558px;top:225px;height:15px;line-height:15px;color:#9c9c9c">7</div>
<div class="t m" style="left:599px;top:225px;height:15px;line-height:15px;color:#c9c9c9">    defaultConfig {</div>
<div class="t m" style="left:558px;top:240px;height:15px;line-height:15px;color:#9c9c9c">8</div>
<div class="t m" style="left:599px;top:240px;height:15px;line-height:15px;color:#c9c9c9">        applicationId <span class="s">"com.reoy.sampleproject"</span></div>
<div class="t m" style="left:558px;top:255px;height:15px;line-height:15px;color:#9c9c9c">9</div>
<div class="t m" style="left:599px;top:255px;height:15px;line-height:15px;color:#c9c9c9">        minSdkVersion <span class="n">15</span></div>
<div class="t m" style="left:551px;top:270px;height:15px;line-height:15px;color:#9c9c9c">10</div>
<div class="t m" style="left:599px;top:270px;height:15px;line-height:15px;color:#c9c9c9">        targetSdkVersion <span class="n">23</span></div>
<div class="t m" style="left:551px;top:285px;height:15px;line-height:15px;color:#9c9c9c">11</div>
<div class="t m" style="left:599px;top:285px;height:15px;line-height:15px;color:#c9c9c9">        versionCode <span class="n">1</span></div>
<div class="t m" style="left:551px;top:300px;height:15px;line-height:15px;color:#9c9c9c">12</div>
<div class="t m" style="left:599px;top:300px;height:15px;line-height:15px;color:#c9c9c9">        versionName <span class="s">"1.0"</span></div>
<div class="t m" style="left:551px;top:315px;height:15px;line-height:15px;color:#9c9c9c">13</div>
<div class="t m" style="left:599px;top:315px;height:15px;line-height:15px;color:#c9c9c9">    }</div>
<div class="t m" style="left:551px;top:330px;height:15px;line-height:15px;color:#9c9c9c">14</div>
<div class="t m" style="left:599px;top:330px;height:15px;line-height:15px;color:#c9c9c9">    buildTypes {</div>
<div class="t m" style="left:551px;top:345px;height:15px;line-height:15px;color:#9c9c9c">15</div>
<div class="t m" style="left:599px;top:345px;height:15px;line-height:15px;color:#c9c9c9">        release {</div>
<div class="t m" style="left:551px;top:360px;height:15px;line-height:15px;color:#9c9c9c">16</div>
<div class="t m" style="left:599px;top:360px;height:15px;line-height:15px;color:#c9c9c9">            minifyEnabled <span class="k">false</span></div>
<div class="t m" style="left:551px;top:375px;height:15px;line-height:15px;color:#9c9c9c">17</div>
<div class="t m" style="left:599px;top:375px;height:15px;line-height:15px;color:#c9c9c9">            proguardFiles <span style="text-decoration:underline;text-underline-offset:1px;color:#c9c9c9">getDefaultProguardFile</span>(<span class="s">'proguard-android.txt'</span>), <span class="s">'proguard-rules.pro'</span></div>
<div class="t m" style="left:551px;top:390px;height:15px;line-height:15px;color:#9c9c9c">18</div>
<div class="t m" style="left:599px;top:390px;height:15px;line-height:15px;color:#c9c9c9">        }</div>
<div class="t m" style="left:551px;top:405px;height:15px;line-height:15px;color:#9c9c9c">19</div>
<div class="t m" style="left:599px;top:405px;height:15px;line-height:15px;color:#c9c9c9">    }</div>
<div class="t m" style="left:551px;top:420px;height:15px;line-height:15px;color:#9c9c9c">20</div>
<div class="t m" style="left:599px;top:420px;height:15px;line-height:15px;color:#c9c9c9">}</div>
<div class="t m" style="left:551px;top:435px;height:15px;line-height:15px;color:#9c9c9c">21</div>
<div class="t m" style="left:551px;top:450px;height:15px;line-height:15px;color:#9c9c9c">22</div>
<div class="t m" style="left:599px;top:450px;height:15px;line-height:15px;color:#c9c9c9">dependencies {</div>
<div class="t m" style="left:551px;top:465px;height:15px;line-height:15px;color:#9c9c9c">23</div>
<div class="t m" style="left:599px;top:465px;height:15px;line-height:15px;color:#c9c9c9">    compile fileTree(<span style="color:#e2e2e2;-webkit-text-stroke:0.45px #e2e2e2">dir:</span> <span class="s">'libs'</span>, <span style="color:#e2e2e2;-webkit-text-stroke:0.45px #e2e2e2">include:</span> [<span class="s">'*.jar'</span>])</div>
<div class="t m" style="left:551px;top:480px;height:15px;line-height:15px;color:#9c9c9c">24</div>
<div class="t m" style="left:599px;top:480px;height:15px;line-height:15px;color:#c9c9c9">    testCompile <span class="s">'junit:junit:4.12'</span></div>
<div class="t m" style="left:551px;top:495px;height:15px;line-height:15px;color:#9c9c9c">25</div>
<div class="t m" style="left:599px;top:495px;height:15px;line-height:15px;color:#c9c9c9">    compile <span class="s">'com.android.support:appcompat-v7:23.1.1'</span></div>
<div class="t m" style="left:551px;top:510px;height:15px;line-height:15px;color:#9c9c9c">26</div>
<div class="t m" style="left:599px;top:510px;height:15px;line-height:15px;color:#c9c9c9">    compile <span class="s">'com.android.support:design:23.1.1'</span></div>
<div class="t m" style="left:551px;top:525px;height:15px;line-height:15px;color:#9c9c9c">27</div>
<div class="t m" style="left:599px;top:525px;height:15px;line-height:15px;color:#c9c9c9">}</div>
<div class="t m" style="left:551px;top:540px;height:15px;line-height:15px;color:#9c9c9c">28</div>
<svg class="a" style="left:589px;top:168.0px;" width="10" height="11" viewBox="0 0 10 11"><path d="M0.5 0.5h8v6L4.5 10.5L0.5 6.5z" fill="#404144" stroke="#8c8c8c" stroke-width="1"/><path d="M2.5 4.5h4" stroke="#8c8c8c" stroke-width="1"/></svg>
<svg class="a" style="left:589px;top:228.0px;" width="10" height="11" viewBox="0 0 10 11"><path d="M0.5 0.5h8v6L4.5 10.5L0.5 6.5z" fill="#404144" stroke="#8c8c8c" stroke-width="1"/><path d="M2.5 4.5h4" stroke="#8c8c8c" stroke-width="1"/></svg>
<svg class="a" style="left:589px;top:333.0px;" width="10" height="11" viewBox="0 0 10 11"><path d="M0.5 0.5h8v6L4.5 10.5L0.5 6.5z" fill="#404144" stroke="#8c8c8c" stroke-width="1"/><path d="M2.5 4.5h4" stroke="#8c8c8c" stroke-width="1"/></svg>
<svg class="a" style="left:589px;top:348.0px;" width="10" height="11" viewBox="0 0 10 11"><path d="M0.5 0.5h8v6L4.5 10.5L0.5 6.5z" fill="#404144" stroke="#8c8c8c" stroke-width="1"/><path d="M2.5 4.5h4" stroke="#8c8c8c" stroke-width="1"/></svg>
<svg class="a" style="left:589px;top:453.0px;" width="10" height="11" viewBox="0 0 10 11"><path d="M0.5 0.5h8v6L4.5 10.5L0.5 6.5z" fill="#404144" stroke="#8c8c8c" stroke-width="1"/><path d="M2.5 4.5h4" stroke="#8c8c8c" stroke-width="1"/></svg>
<svg class="a" style="left:589px;top:316.0px;" width="10" height="11" viewBox="0 0 10 11"><path d="M0.5 10.5h8V4.5L4.5 0.5L0.5 4.5z" fill="#404144" stroke="#8c8c8c" stroke-width="1"/><path d="M2.5 6.5h4" stroke="#8c8c8c" stroke-width="1"/></svg>
<svg class="a" style="left:589px;top:391.0px;" width="10" height="11" viewBox="0 0 10 11"><path d="M0.5 10.5h8V4.5L4.5 0.5L0.5 4.5z" fill="#404144" stroke="#8c8c8c" stroke-width="1"/><path d="M2.5 6.5h4" stroke="#8c8c8c" stroke-width="1"/></svg>
<svg class="a" style="left:589px;top:406.0px;" width="10" height="11" viewBox="0 0 10 11"><path d="M0.5 10.5h8V4.5L4.5 0.5L0.5 4.5z" fill="#404144" stroke="#8c8c8c" stroke-width="1"/><path d="M2.5 6.5h4" stroke="#8c8c8c" stroke-width="1"/></svg>
<svg class="a" style="left:589px;top:421.0px;" width="10" height="11" viewBox="0 0 10 11"><path d="M0.5 10.5h8V4.5L4.5 0.5L0.5 4.5z" fill="#404144" stroke="#8c8c8c" stroke-width="1"/><path d="M2.5 6.5h4" stroke="#8c8c8c" stroke-width="1"/></svg>
<svg class="a" style="left:589px;top:526.0px;" width="10" height="11" viewBox="0 0 10 11"><path d="M0.5 10.5h8V4.5L4.5 0.5L0.5 4.5z" fill="#404144" stroke="#8c8c8c" stroke-width="1"/><path d="M2.5 6.5h4" stroke="#8c8c8c" stroke-width="1"/></svg>
<svg class="a" style="left:1486px;top:134px;" width="15" height="18" viewBox="0 0 15 18"><path d="M2.5 8L5.8 11L12 4.5" fill="none" stroke="#62b36a" stroke-width="2.6"/><rect x="1" y="16" width="14" height="2" fill="#0a8a2a"/></svg>
<div class="a" style="left:1502px;top:129px;width:453px;height:1px;background:#363839"></div>
<div class="a" style="left:1502px;top:107px;width:453px;height:1px;background:#5a5e60"></div>
<div class="a" style="left:1502px;top:159px;width:453px;height:1px;background:#363839"></div>
<div class="t" style="left:1507px;top:108px;height:21px;line-height:21px;font-size:12px;color:#a3a3a3">Gradle projects</div>
<svg class="a" style="left:1907px;top:112px;" width="19" height="12" viewBox="0 0 19 12"><circle cx="6" cy="6" r="4.3" fill="#aaaaaa"/><circle cx="6" cy="6" r="1.3" fill="#4b4f51"/><rect x="5" y="0" width="2" height="2.6" fill="#aaaaaa" transform="rotate(0 6 6)"/><rect x="5" y="0" width="2" height="2.6" fill="#aaaaaa" transform="rotate(45 6 6)"/><rect x="5" y="0" width="2" height="2.6" fill="#aaaaaa" transform="rotate(90 6 6)"/><rect x="5" y="0" width="2" height="2.6" fill="#aaaaaa" transform="rotate(135 6 6)"/><rect x="5" y="0" width="2" height="2.6" fill="#aaaaaa" transform="rotate(180 6 6)"/><rect x="5" y="0" width="2" height="2.6" fill="#aaaaaa" transform="rotate(225 6 6)"/><rect x="5" y="0" width="2" height="2.6" fill="#aaaaaa" transform="rotate(270 6 6)"/><rect x="5" y="0" width="2" height="2.6" fill="#aaaaaa" transform="rotate(315 6 6)"/><path d="M13.5 5.5h5l-2.5 2.8z" fill="#aaaaaa"/></svg>
<svg class="a" style="left:1935px;top:111px;" width="13" height="13" viewBox="0 0 13 13"><path d="M0 5.5H7.5M5.5 3.5L7.5 5.5L5.5 7.5" fill="none" stroke="#a9a9a9" stroke-width="1.3"/><rect x="9.5" y="0.5" width="2.5" height="11.5" fill="none" stroke="#a9a9a9" stroke-width="1.2"/></svg>
<div class="a" style="left:1582px;top:134px;width:1.5px;height:1.5px;background:#8d8f90"></div>
<div class="a" style="left:1613px;top:134px;width:1.5px;height:1.5px;background:#8d8f90"></div>
<div class="a" style="left:1669px;top:134px;width:1.5px;height:1.5px;background:#8d8f90"></div>
<div class="a" style="left:1700px;top:134px;width:1.5px;height:1.5px;background:#8d8f90"></div>
<svg class="a" style="left:1508px;top:136px;" width="16" height="16" viewBox="0 0 16 16"><path d="M7 2.5A5.5 5.5 0 0 0 6 13.2" fill="none" stroke="#49a9da" stroke-width="2.4"/><path d="M2 14.5L7.5 14.5L7.5 9z" fill="#49a9da"/><path d="M9 13.5A5.5 5.5 0 0 0 10 2.8" fill="none" stroke="#6bbbe2" stroke-width="2.4"/><path d="M14 1.5L8.5 1.5L8.5 7z" fill="#6bbbe2"/></svg>
<svg class="a" style="left:1535px;top:138px;" width="12" height="12" viewBox="0 0 12 12"><path d="M6 1v10M1 6h10" stroke="#c6c6c6" stroke-width="1.8"/></svg>
<svg class="a" style="left:1560px;top:138px;" width="12" height="12" viewBox="0 0 12 12"><path d="M1 6h10" stroke="#a9a9a9" stroke-width="1.8"/></svg>
<svg class="a" style="left:1589px;top:136px;" width="16" height="16" viewBox="0 0 16 16"><path d="M6.96 2.09A6.0 6.0 0 0 1 13.94 7.16" fill="none" stroke="#00ad5f" stroke-width="2.2"/><path d="M13.82 9.45A6.0 6.0 0 1 1 4.64 3.03" fill="none" stroke="#a3d66c" stroke-width="2.2"/><circle cx="8" cy="8" r="2.7" fill="#00ad5f"/></svg>
<svg class="a" style="left:1621px;top:136px;" width="14" height="16" viewBox="0 0 14 16"><path d="M1 1h12M1 15h12" stroke="#bdbdbd" stroke-width="1.3"/><path d="M7 3L3.5 7h7zM7 13L3.5 9h7z" fill="#4aa9dc"/></svg>
<svg class="a" style="left:1646px;top:136px;" width="14" height="16" viewBox="0 0 14 16"><path d="M1 6.5h12M1 9.5h12" stroke="#bdbdbd" stroke-width="1.3"/><path d="M7 5.5L3.5 1h7zM7 10.5L3.5 15h7z" fill="#4aa9dc"/></svg>
<svg class="a" style="left:1676px;top:137px;" width="16" height="14" viewBox="0 0 16 14"><rect x="0" y="4" width="5" height="6" fill="#49a6d6"/><rect x="11" y="4" width="5" height="6" fill="#49a6d6"/><path d="M6 13L9 1M8 13L11 1" stroke="#7e8b93" stroke-width="1"/></svg>
<svg class="a" style="left:1707px;top:135px;" width="17" height="17" viewBox="0 0 17 17"><rect x="1" y="1" width="11" height="11" fill="none" stroke="#a9a9a9" stroke-width="1.6"/><circle cx="6.5" cy="6.5" r="2.6" fill="none" stroke="#e3a33d" stroke-width="1.8"/><path d="M16.5 9.5L14.8 11L13.5 10L14.8 8.5A2.8 2.8 0 0 0 11.5 12.3L8.5 15.3L9.8 16.6L12.8 13.6A2.8 2.8 0 0 0 16.5 9.5z" fill="#a9a9a9"/></svg>
<div class="a" style="left:1502px;top:198px;width:453px;height:19px;background:#04344b"></div>
<svg class="a" style="left:1504.5px;top:165px;" width="10" height="10" viewBox="0 0 10 10"><path d="M0.5 1L9.5 1L5 9.5z" fill="#c0c0c0"/></svg>
<svg class="a" style="left:1524px;top:161.5px;" width="16" height="16" viewBox="0 0 16 16"><path d="M6.96 2.09A6.0 6.0 0 0 1 13.94 7.16" fill="none" stroke="#00ad5f" stroke-width="2.2"/><path d="M13.82 9.45A6.0 6.0 0 1 1 4.64 3.03" fill="none" stroke="#a3d66c" stroke-width="2.2"/><circle cx="8" cy="8" r="2.7" fill="#00ad5f"/></svg>
<div class="t" style="left:1542px;top:160px;height:19px;line-height:19px;font-size:12.7px;color:#d0d0d0">SampleProject</div>
<svg class="a" style="left:1525px;top:183.5px;" width="10" height="10" viewBox="0 0 10 10"><path d="M1 0.5L9.5 5L1 9.5z" fill="#c0c0c0"/></svg>
<svg class="a" style="left:1544px;top:180.5px;" width="16" height="16" viewBox="0 0 16 16"><path d="M6.96 2.09A6.0 6.0 0 0 1 13.94 7.16" fill="none" stroke="#00ad5f" stroke-width="2.2"/><path d="M13.82 9.45A6.0 6.0 0 1 1 4.64 3.03" fill="none" stroke="#a3d66c" stroke-width="2.2"/><circle cx="8" cy="8" r="2.7" fill="#00ad5f"/></svg>
<div class="t" style="left:1562px;top:179px;height:19px;line-height:19px;font-size:12.7px;color:#d0d0d0">SampleProject <span style="color:#8f8f8f">(root)</span></div>
<svg class="a" style="left:1525px;top:202.5px;" width="10" height="10" viewBox="0 0 10 10"><path d="M1 0.5L9.5 5L1 9.5z" fill="#c0c0c0"/></svg>
<svg class="a" style="left:1544px;top:199.5px;" width="16" height="16" viewBox="0 0 16 16"><path d="M6.96 2.09A6.0 6.0 0 0 1 13.94 7.16" fill="none" stroke="#00ad5f" stroke-width="2.2"/><path d="M13.82 9.45A6.0 6.0 0 1 1 4.64 3.03" fill="none" stroke="#a3d66c" stroke-width="2.2"/><circle cx="8" cy="8" r="2.7" fill="#00ad5f"/></svg>
<div class="t" style="left:1562px;top:198px;height:19px;line-height:19px;font-size:13px;color:#d8d8d8">:app</div>
<div class="a" style="left:56px;top:193px;width:20px;height:88px;background:#393b3d"></div>
<div class="a" style="left:56px;top:927px;width:20px;height:114px;background:#393b3d"></div>
<div class="vr" style="left:57px;top:164.5px;transform:rotate(-90deg);font-size:12px;color:#c4c4c4">Captures</div>
<svg class="a" style="left:59px;top:168px;" width="14" height="15" viewBox="0 0 14 15"><circle cx="7" cy="8.5" r="5.3" fill="#4a4f51" stroke="#a9a9a9" stroke-width="1.5"/><circle cx="7" cy="8.5" r="3.5" fill="#5fb4e0"/><path d="M7 8.5L9 6.5" stroke="#fff" stroke-width="1"/><path d="M5 1.5h4M7 1.5v1.5" stroke="#a9a9a9" stroke-width="1.3"/></svg>
<div class="vr" style="left:57px;top:253.5px;transform:rotate(-90deg);font-size:12px;color:#ffffff"><u>1</u>: Project</div>
<svg class="a" style="left:59px;top:260px;" width="14" height="14" viewBox="0 0 14 14"><circle cx="7" cy="7" r="6.8" fill="#7fba4b"/><path d="M3.5 11.5L7 3.5L10.5 11.5M4.5 8.5h5" fill="none" stroke="#e6f2da" stroke-width="1.2"/></svg>
<div class="vr" style="left:57px;top:354.5px;transform:rotate(-90deg);font-size:12px;color:#c4c4c4"><u>Z</u>: Structure</div>
<svg class="a" style="left:59px;top:358px;" width="14" height="15" viewBox="0 0 14 15"><path d="M3 3L7 11M11 3L7 11M3 3H11" stroke="#a9a9a9" stroke-width="1.1"/><circle cx="3" cy="3" r="2.5" fill="#55a7dc"/><circle cx="11" cy="3" r="2.5" fill="#e8636a"/><circle cx="7" cy="11.5" r="2.8" fill="#e6a33e"/></svg>
<div class="vr" style="left:57px;top:898.5px;transform:rotate(-90deg);font-size:12px;color:#c4c4c4"><u>2</u>: Favorites</div>
<svg class="a" style="left:59px;top:901px;" width="14" height="14" viewBox="0 0 14 14"><path d="M7 0.5L8.9 5H13.5L9.8 8L11.2 13L7 10L2.8 13L4.2 8L0.5 5H5.1z" fill="#eda746"/></svg>
<div class="vr" style="left:57px;top:1012.5px;transform:rotate(-90deg);font-size:12px;color:#ffffff">Build Variants</div>
<svg class="a" style="left:59px;top:1016px;" width="14" height="15" viewBox="0 0 14 15"><path d="M3 5.5A4 4 0 0 1 11 5.5z" fill="#98bd3f"/><rect x="3" y="6.3" width="8" height="5.5" rx="0.8" fill="#98bd3f"/><rect x="1" y="6.3" width="1.5" height="4.5" rx="0.7" fill="#98bd3f"/><rect x="11.5" y="6.3" width="1.5" height="4.5" rx="0.7" fill="#98bd3f"/><rect x="4.5" y="11" width="1.6" height="3.5" rx="0.8" fill="#98bd3f"/><rect x="7.9" y="11" width="1.6" height="3.5" rx="0.8" fill="#98bd3f"/><path d="M4 1.5l1.2 1.7M10 1.5L8.8 3.2" stroke="#98bd3f" stroke-width="0.8"/></svg>
<div class="a" style="left:1956px;top:226px;width:20px;height:72px;background:#393b3d"></div>
<div class="t" style="left:1959px;top:114px;height:20px;line-height:20px;font-size:15px;font-style:italic;font-weight:bold;color:#5ab3dc">m</div>
<div class="vr" style="left:1975px;top:135.5px;transform:rotate(90deg);font-size:12px;color:#c4c4c4">Maven Projects</div>
<svg class="a" style="left:1958px;top:235px;" width="16" height="16" viewBox="0 0 16 16"><path d="M7.04 2.58A5.5 5.5 0 0 1 13.45 7.23" fill="none" stroke="#00ad5f" stroke-width="2.2"/><path d="M13.34 9.33A5.5 5.5 0 1 1 4.92 3.44" fill="none" stroke="#a3d66c" stroke-width="2.2"/><circle cx="8" cy="8" r="2.7" fill="#00ad5f"/></svg>
<div class="vr" style="left:1975px;top:253px;transform:rotate(90deg);font-size:12px;color:#ffffff">Gradle</div>
<svg class="a" style="left:1959px;top:932px;" width="14" height="15" viewBox="0 0 14 15"><path d="M3 5.5A4 4 0 0 1 11 5.5z" fill="#98bd3f"/><rect x="3" y="6.3" width="8" height="5.5" rx="0.8" fill="#98bd3f"/><rect x="1" y="6.3" width="1.5" height="4.5" rx="0.7" fill="#98bd3f"/><rect x="11.5" y="6.3" width="1.5" height="4.5" rx="0.7" fill="#98bd3f"/><rect x="4.5" y="11" width="1.6" height="3.5" rx="0.8" fill="#98bd3f"/><rect x="7.9" y="11" width="1.6" height="3.5" rx="0.8" fill="#98bd3f"/><path d="M4 1.5l1.2 1.7M10 1.5L8.8 3.2" stroke="#98bd3f" stroke-width="0.8"/></svg>
<div class="vr" style="left:1975px;top:950px;transform:rotate(90deg);font-size:12px;color:#c4c4c4">Android Model</div>
<div class="a" style="left:77px;top:734px;width:1878px;height:1px;background:#5c6062"></div>
<div class="a" style="left:77px;top:735px;width:1878px;height:22px;background:linear-gradient(#505456,#484c4e)"></div>
<div class="a" style="left:77px;top:756px;width:1878px;height:1px;background:#3a3d3f"></div>
<div class="a" style="left:77px;top:757px;width:1878px;height:1px;background:#595d5f"></div>
<div class="t" style="left:82px;top:735px;height:21px;line-height:21px;font-size:12px;color:#a3a3a3">Run</div>
<svg class="a" style="left:105.5px;top:737px;" width="16" height="16" viewBox="0 0 16 16"><path d="M6.96 2.09A6.0 6.0 0 0 1 13.94 7.16" fill="none" stroke="#3d8a55" stroke-width="2.2"/><path d="M13.82 9.45A6.0 6.0 0 1 1 4.64 3.03" fill="none" stroke="#6a9a5e" stroke-width="2.2"/><circle cx="8" cy="8" r="2.7" fill="#3d8a55"/></svg>
<div class="t" style="left:126px;top:735px;height:21px;line-height:21px;font-size:12px;color:#a3a3a3">SampleProject [signingReport]</div>
<svg class="a" style="left:1907px;top:739px;" width="19" height="12" viewBox="0 0 19 12"><circle cx="6" cy="6" r="4.3" fill="#aaaaaa"/><circle cx="6" cy="6" r="1.3" fill="#4b4f51"/><rect x="5" y="0" width="2" height="2.6" fill="#aaaaaa" transform="rotate(0 6 6)"/><rect x="5" y="0" width="2" height="2.6" fill="#aaaaaa" transform="rotate(45 6 6)"/><rect x="5" y="0" width="2" height="2.6" fill="#aaaaaa" transform="rotate(90 6 6)"/><rect x="5" y="0" width="2" height="2.6" fill="#aaaaaa" transform="rotate(135 6 6)"/><rect x="5" y="0" width="2" height="2.6" fill="#aaaaaa" transform="rotate(180 6 6)"/><rect x="5" y="0" width="2" height="2.6" fill="#aaaaaa" transform="rotate(225 6 6)"/><rect x="5" y="0" width="2" height="2.6" fill="#aaaaaa" transform="rotate(270 6 6)"/><rect x="5" y="0" width="2" height="2.6" fill="#aaaaaa" transform="rotate(315 6 6)"/><path d="M13.5 5.5h5l-2.5 2.8z" fill="#aaaaaa"/></svg>
<svg class="a" style="left:1935px;top:738px;" width="13" height="14" viewBox="0 0 13 14"><path d="M6 0.5V8M3.8 5.8L6 8L8.2 5.8" fill="none" stroke="#a9a9a9" stroke-width="1.3"/><path d="M0.5 10.5h11v2.5h-11z" fill="none" stroke="#a9a9a9" stroke-width="1.1"/></svg>
<div class="a" style="left:106px;top:758px;width:1px;height:283px;background:#393b3d"></div>
<div class="a" style="left:136px;top:758px;width:4px;height:283px;background:#45494b"></div>
<div class="a" style="left:140px;top:758px;width:1815px;height:283px;background:#383838"></div>
<svg class="a" style="left:85px;top:764px;" width="11" height="13" viewBox="0 0 11 13"><path d="M0 0L10.5 6.5L0 13z" fill="#20b55a"/></svg>
<div class="a" style="left:85px;top:790px;width:12px;height:12px;background:#8c8c8c"></div>
<div class="a" style="left:81px;top:812px;width:1.5px;height:1.5px;background:#8d8f90"></div>
<div class="a" style="left:81px;top:843px;width:1.5px;height:1.5px;background:#8d8f90"></div>
<svg class="a" style="left:83px;top:819px;" width="16" height="15" viewBox="0 0 16 15"><rect x="0.8" y="0.8" width="8" height="6" fill="#4a4f51" stroke="#58a9d8" stroke-width="1.3"/><rect x="2.5" y="2.5" width="4.5" height="2.5" fill="#58a9d8"/><rect x="10.5" y="0.8" width="4.5" height="6" fill="none" stroke="#a9a9a9" stroke-width="1.1"/><rect x="0.8" y="9" width="14.2" height="5" fill="none" stroke="#a9a9a9" stroke-width="1.1"/></svg>
<svg class="a" style="left:83px;top:850px;" width="16" height="16" viewBox="0 0 16 16"><path d="M1 15L6 10" stroke="#9a9a9a" stroke-width="1.4"/><ellipse cx="10" cy="6" rx="4.5" ry="2.8" transform="rotate(-40 10 6)" fill="#b88ad0"/><path d="M5.5 8.5L9 12" stroke="#b88ad0" stroke-width="2.2"/></svg>
<svg class="a" style="left:85px;top:877px;" width="12" height="12" viewBox="0 0 12 12"><path d="M1 1L11 11M11 1L1 11" stroke="#e56b60" stroke-width="2"/></svg>
<div class="t" style="left:85px;top:898px;height:20px;line-height:20px;font-size:17px;font-weight:bold;color:#45b0e0;line-height:20px;-webkit-text-stroke:0">?</div>
<svg class="a" style="left:115px;top:764px;" width="12" height="13" viewBox="0 0 12 13"><path d="M6 0.5L11.5 6H8v6.5H4V6H0.5z" fill="#8e8e8e"/></svg>
<svg class="a" style="left:115px;top:789px;" width="12" height="13" viewBox="0 0 12 13"><path d="M6 12.5L11.5 7H8V0.5H4V7H0.5z" fill="#8e8e8e"/></svg>
<svg class="a" style="left:113px;top:813px;" width="16" height="16" viewBox="0 0 16 16"><path d="M1 1.5h11M4 6.5h5M1 11.5h5" stroke="#bdbdbd" stroke-width="1.2"/><path d="M13 2v5.5H5.5M7.5 5.5L5.5 7.5L7.5 9.5" fill="none" stroke="#4aa9dc" stroke-width="1.3"/><path d="M3 7v5.5h10.5M11.5 10.5l2 2l-2 2" fill="none" stroke="#4aa9dc" stroke-width="1.3"/></svg>
<svg class="a" style="left:113px;top:838px;" width="16" height="16" viewBox="0 0 16 16"><rect x="0.8" y="2.8" width="13.5" height="12" fill="#4a4f51" stroke="#9e9e9e" stroke-width="1.4"/><path d="M2 4h10v3H2z" fill="#6a6e70"/><path d="M10.5 0.5V9M7.5 6.5L10.5 10L13.5 6.5" fill="none" stroke="#b88ad0" stroke-width="2"/></svg>
<svg class="a" style="left:113px;top:863px;" width="16" height="16" viewBox="0 0 16 16"><rect x="0.5" y="4" width="15" height="5.5" fill="#4aa9dc"/><rect x="3.5" y="0.5" width="9" height="4" fill="#bdbdbd"/><rect x="4" y="8" width="8" height="7" fill="#4a4f51" stroke="#bdbdbd" stroke-width="1.4"/><rect x="6" y="10" width="4" height="3" fill="#8e8e8e"/></svg>
<svg class="a" style="left:114px;top:888px;" width="14" height="16" viewBox="0 0 14 16"><path d="M0.5 3h13M5 1h4" stroke="#9e9e9e" stroke-width="1.6"/><path d="M1.5 4.5h11l-1 11h-9z" fill="#4aa9dc"/><path d="M4.5 6.5v7M7 6.5v7M9.5 6.5v7" stroke="#2b6c8e" stroke-width="0.9"/></svg>
<div class="t m" style="left:146px;top:757px;height:15px;line-height:15px;color:#c9c9c9">Config: none</div>
<div class="a" style="left:146px;top:778px;width:6px;height:2px;background:#c9c9c9"></div>
<div class="a" style="left:153px;top:778px;width:6px;height:2px;background:#c9c9c9"></div>
<div class="a" style="left:160px;top:778px;width:6px;height:2px;background:#c9c9c9"></div>
<div class="a" style="left:167px;top:778px;width:6px;height:2px;background:#c9c9c9"></div>
<div class="a" style="left:174px;top:778px;width:6px;height:2px;background:#c9c9c9"></div>
<div class="a" style="left:181px;top:778px;width:6px;height:2px;background:#c9c9c9"></div>
<div class="a" style="left:188px;top:778px;width:6px;height:2px;background:#c9c9c9"></div>
<div class="a" style="left:195px;top:778px;width:6px;height:2px;background:#c9c9c9"></div>
<div class="a" style="left:202px;top:778px;width:6px;height:2px;background:#c9c9c9"></div>
<div class="a" style="left:209px;top:778px;width:6px;height:2px;background:#c9c9c9"></div>
<div class="t m" style="left:146px;top:787px;height:15px;line-height:15px;color:#c9c9c9">Variant: releaseUnitTest</div>
<div class="t m" style="left:146px;top:802px;height:15px;line-height:15px;color:#c9c9c9">Config: none</div>
<div class="a" style="left:146px;top:823px;width:6px;height:2px;background:#c9c9c9"></div>
<div class="a" style="left:153px;top:823px;width:6px;height:2px;background:#c9c9c9"></div>
<div class="a" style="left:160px;top:823px;width:6px;height:2px;background:#c9c9c9"></div>
<div class="a" style="left:167px;top:823px;width:6px;height:2px;background:#c9c9c9"></div>
<div class="a" style="left:174px;top:823px;width:6px;height:2px;background:#c9c9c9"></div>
<div class="a" style="left:181px;top:823px;width:6px;height:2px;background:#c9c9c9"></div>
<div class="a" style="left:188px;top:823px;width:6px;height:2px;background:#c9c9c9"></div>
<div class="a" style="left:195px;top:823px;width:6px;height:2px;background:#c9c9c9"></div>
<div class="a" style="left:202px;top:823px;width:6px;height:2px;background:#c9c9c9"></div>
<div class="a" style="left:209px;top:823px;width:6px;height:2px;background:#c9c9c9"></div>
<div class="t m" style="left:146px;top:832px;height:15px;line-height:15px;color:#c9c9c9">Variant: debugAndroidTest</div>
<div class="t m" style="left:146px;top:847px;height:15px;line-height:15px;color:#c9c9c9">Config: debug</div>
<div class="t m" style="left:146px;top:862px;height:15px;line-height:15px;color:#c9c9c9">Store: /Users/reoy/.android/debug.keystore</div>
<div class="t m" style="left:146px;top:877px;height:15px;line-height:15px;color:#c9c9c9">Alias: AndroidDebugKey</div>
<div class="t m" style="left:146px;top:892px;height:15px;line-height:15px;color:#c9c9c9">MD5: C8:F6:10:DE:2C:EB:9D:FF:A0:72:CD:ED:BB:91:E9:F7</div>
<div class="t m" style="left:146px;top:907px;height:15px;line-height:15px;color:#c9c9c9">SHA1: 3B:43:97:63:AE:01:FE:D5:AE:A9:E3:64:56:BD:80:B0:E6:70:01:B5</div>
<div class="t m" style="left:146px;top:922px;height:15px;line-height:15px;color:#c9c9c9">Valid until: 2045</div>
<svg class="a" style="left:265px;top:924px;" width="12" height="12" viewBox="0 0 12 12"><path d="M3 0.5L1.5 3M2.5 2h8M2.5 5h7M0.5 8h11M6 2v10M2.5 5v3" fill="none" stroke="#c9c9c9" stroke-width="1"/></svg>
<div class="t m" style="left:277px;top:922px;height:15px;line-height:15px;color:#c9c9c9">5</div>
<svg class="a" style="left:284px;top:924px;" width="12" height="12" viewBox="0 0 12 12"><path d="M2.5 1h6.5v10.5L7.5 11M2.5 1v6Q2.5 10 0.5 12M2.5 4.5h6.5M2.5 7.5h6.5" fill="none" stroke="#c9c9c9" stroke-width="1"/></svg>
<div class="t m" style="left:296px;top:922px;height:15px;line-height:15px;color:#c9c9c9">26</div>
<svg class="a" style="left:310px;top:924px;" width="12" height="12" viewBox="0 0 12 12"><path d="M2 1h7v10.5H2zM2 6h7" fill="none" stroke="#c9c9c9" stroke-width="1"/></svg>
<div class="a" style="left:146px;top:943px;width:6px;height:2px;background:#c9c9c9"></div>
<div class="a" style="left:153px;top:943px;width:6px;height:2px;background:#c9c9c9"></div>
<div class="a" style="left:160px;top:943px;width:6px;height:2px;background:#c9c9c9"></div>
<div class="a" style="left:167px;top:943px;width:6px;height:2px;background:#c9c9c9"></div>
<div class="a" style="left:174px;top:943px;width:6px;height:2px;background:#c9c9c9"></div>
<div class="a" style="left:181px;top:943px;width:6px;height:2px;background:#c9c9c9"></div>
<div class="a" style="left:188px;top:943px;width:6px;height:2px;background:#c9c9c9"></div>
<div class="a" style="left:195px;top:943px;width:6px;height:2px;background:#c9c9c9"></div>
<div class="a" style="left:202px;top:943px;width:6px;height:2px;background:#c9c9c9"></div>
<div class="a" style="left:209px;top:943px;width:6px;height:2px;background:#c9c9c9"></div>
<div class="t m" style="left:146px;top:967px;height:15px;line-height:15px;color:#c9c9c9">BUILD SUCCESSFUL</div>
<div class="t m" style="left:146px;top:997px;height:15px;line-height:15px;color:#c9c9c9">Total time: 1.761 secs</div>
<div class="t m" style="left:146px;top:1012px;height:15px;line-height:15px;color:#c9c9c9">17:19:43: External task execution finished 'signingReport'.</div>
<div class="a" style="left:56px;top:1041px;width:1920px;height:1px;background:#363839"></div>
<div class="a" style="left:56px;top:1062px;width:1920px;height:1px;background:#3c3e40"></div>
<div class="a" style="left:409px;top:1042px;width:71px;height:20px;background:#393b3d"></div>
<svg class="a" style="left:84px;top:1045px;" width="15" height="14" viewBox="0 0 15 14"><rect x="0.5" y="0.5" width="14" height="13" fill="#111" stroke="#9a9a9a" stroke-width="1"/><rect x="0.5" y="0.5" width="14" height="2.5" fill="#9a9a9a"/><path d="M3 5.5L5.5 7.5L3 9.5M6.5 10h3" fill="none" stroke="#eee" stroke-width="0.9"/></svg>
<div class="t" style="left:102px;top:1042px;height:20px;line-height:20px;font-size:12px;color:#cdcdcd;font-size:12.1px">Terminal</div>
<svg class="a" style="left:170px;top:1045px;" width="13" height="13" viewBox="0 0 13 13"><rect x="0" y="0" width="13" height="13" fill="#f2c28a"/><rect x="3" y="3" width="7" height="7" fill="none" stroke="#d09a5e" stroke-width="0.9"/></svg>
<div class="t" style="left:188px;top:1042px;height:20px;line-height:20px;font-size:12px;color:#cdcdcd;font-size:11.35px"><u>0</u>: Messages</div>
<svg class="a" style="left:277px;top:1045px;" width="14" height="15" viewBox="0 0 14 15"><path d="M3 5.5A4 4 0 0 1 11 5.5z" fill="#98bd3f"/><rect x="3" y="6.3" width="8" height="5.5" rx="0.8" fill="#98bd3f"/><rect x="1" y="6.3" width="1.5" height="4.5" rx="0.7" fill="#98bd3f"/><rect x="11.5" y="6.3" width="1.5" height="4.5" rx="0.7" fill="#98bd3f"/><rect x="4.5" y="11" width="1.6" height="3.5" rx="0.8" fill="#98bd3f"/><rect x="7.9" y="11" width="1.6" height="3.5" rx="0.8" fill="#98bd3f"/><path d="M4 1.5l1.2 1.7M10 1.5L8.8 3.2" stroke="#98bd3f" stroke-width="0.8"/></svg>
<div class="t" style="left:295px;top:1042px;height:20px;line-height:20px;font-size:12px;color:#cdcdcd;font-size:12.45px"><u>6</u>: Android Monitor</div>
<svg class="a" style="left:421px;top:1045px;" width="11" height="14" viewBox="0 0 11 14"><path d="M0 0L10.5 7L0 14z" fill="#20b55a"/></svg>
<div class="t" style="left:437px;top:1042px;height:20px;line-height:20px;font-size:11.4px;color:#ffffff"><u>4</u>: Run</div>
<svg class="a" style="left:490px;top:1045px;" width="16" height="15" viewBox="0 0 16 15"><circle cx="5" cy="4" r="3.3" fill="#e8e8e8" stroke="#8a8a8a" stroke-width="0.8"/><circle cx="10" cy="9" r="4" fill="#f2c79a"/><path d="M6 14.5h8V12H6z" fill="#4aa9dc"/><rect x="6" y="5" width="8" height="2" fill="#8a8a8a"/></svg>
<div class="t" style="left:508px;top:1042px;height:20px;line-height:20px;font-size:12px;color:#cdcdcd;font-size:11.15px">TODO</div>
<svg class="a" style="left:1752px;top:1045px;" width="14" height="13" viewBox="0 0 14 13"><path d="M1 1h12v8H6l-3 3V9H1z" fill="#8e8e8e"/></svg>
<div class="t" style="left:1771px;top:1042px;height:20px;line-height:20px;font-size:12px;color:#cdcdcd;font-size:11.45px">Event Log</div>
<svg class="a" style="left:1847px;top:1045px;" width="13" height="13" viewBox="0 0 13 13"><rect x="0.5" y="0.5" width="12" height="12" fill="#5aa7d2" stroke="#7a8a92" stroke-width="1"/><rect x="3" y="3" width="6" height="6" fill="none" stroke="#2d6c8e" stroke-width="1"/></svg>
<div class="t" style="left:1864px;top:1042px;height:20px;line-height:20px;font-size:12px;color:#cdcdcd;font-size:11.85px">Gradle Console</div>
<svg class="a" style="left:61px;top:1065px;" width="14" height="16" viewBox="0 0 14 16"><rect x="0.8" y="0.8" width="12.4" height="11.5" fill="#7a7a7a" stroke="#c9c9c9" stroke-width="1.2"/><path d="M0 14.8h14" stroke="#c9c9c9" stroke-width="1.2"/></svg>
<div class="t" style="left:87px;top:1063px;height:20px;line-height:20px;font-size:12.1px;color:#cdcdcd">Gradle build finished in 5s 499ms (47 minutes ago)</div>
<div class="t" style="left:1682px;top:1063px;height:20px;line-height:20px;font-size:11px;color:#cdcdcd">1:1</div>
<div class="t" style="left:1709px;top:1063px;height:20px;line-height:20px;font-size:12px;color:#cdcdcd">LF</div>
<svg class="a" style="left:1722px;top:1067px;" width="5" height="11" viewBox="0 0 5 11"><path d="M0 4L2.5 0.5L5 4zM0 7L2.5 10.5L5 7z" fill="#cdcdcd"/></svg>
<div class="t" style="left:1735px;top:1063px;height:20px;line-height:20px;font-size:11.8px;color:#cdcdcd">UTF-8</div>
<svg class="a" style="left:1769px;top:1067px;" width="5" height="11" viewBox="0 0 5 11"><path d="M0 4L2.5 0.5L5 4zM0 7L2.5 10.5L5 7z" fill="#cdcdcd"/></svg>
<div class="t" style="left:1783px;top:1063px;height:20px;line-height:20px;font-size:12.6px;color:#8f8f8f">Context: &lt;no context&gt;</div>
<svg class="a" style="left:1933px;top:1066px;" width="11" height="12" viewBox="0 0 11 12"><path d="M1.5 5V3a2.3 2.3 0 0 1 4.6 0" fill="none" stroke="#c9c9c9" stroke-width="1.2"/><rect x="3" y="5" width="7.5" height="6" fill="#c9c9c9"/><rect x="5.8" y="7" width="2" height="2" fill="#4b4f51"/></svg>
<svg class="a" style="left:1955px;top:1064px;" width="15" height="16" viewBox="0 0 15 16"><rect x="4" y="0.8" width="7" height="5" rx="1.5" fill="none" stroke="#bdbdbd" stroke-width="1.1"/><rect x="1" y="5.5" width="13" height="3" fill="#bdbdbd"/><path d="M3 9v4h9V9M4.5 13v2.5M10.5 13v2.5M2 15.5h4M9 15.5h4" fill="none" stroke="#bdbdbd" stroke-width="1.1"/><rect x="6.5" y="2.5" width="2" height="2" fill="#bdbdbd"/></svg>
<div class="a" style="left:1490px;top:84px;width:492px;height:696px;border:6px solid #fd4224;border-radius:24px"></div>
<div class="t" style="left:1269.5px;top:660.5px;height:56px;line-height:56px;font-size:47px;color:#fd4224;letter-spacing:0px;-webkit-text-stroke:1.4px #fd4224">Gradle</div>
<svg class="a" style="left:1426px;top:679px;" width="40" height="19" viewBox="0 0 40 19"><path d="M1 9.5H38M27.5 1.5L38 9.5L27.5 17.5" fill="none" stroke="#fd4224" stroke-width="1.8"/></svg>
</body></html>
